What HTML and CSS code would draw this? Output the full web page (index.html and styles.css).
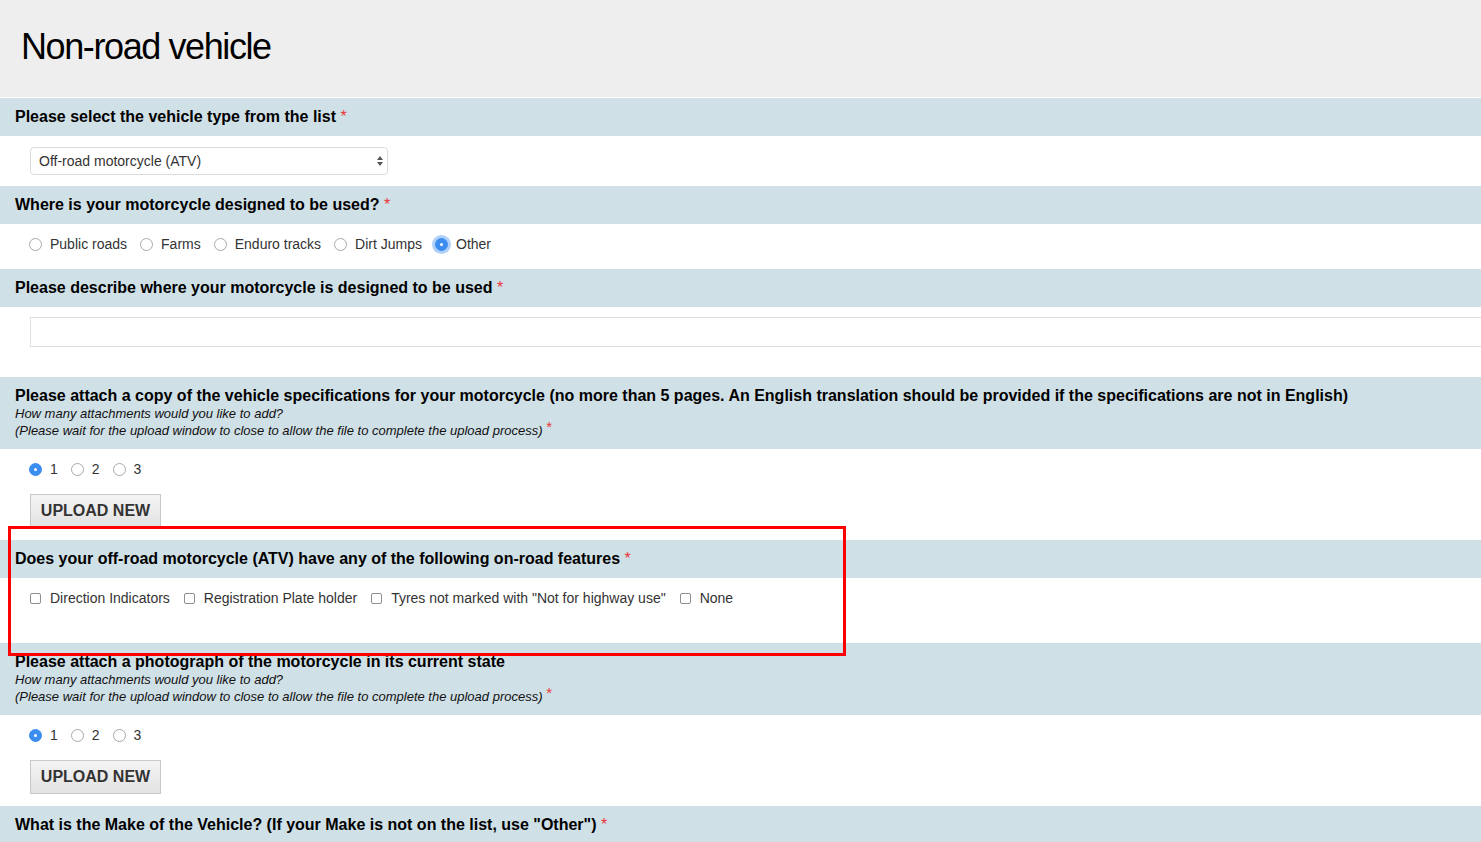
FILE: index.html
```html
<!DOCTYPE html>
<html lang="en">
<head>
    <meta charset="UTF-8">
    <meta name="viewport" content="width=device-width, initial-scale=1.0">
    <title>Non-road vehicle</title>
    <link rel="stylesheet" href="styles.css">
</head>
<body>
    <!-- Page title -->
    <div class="page-header">
        <h1>Non-road vehicle</h1>
    </div>

    <div class="form">
        <!-- Vehicle type -->
        <div class="question">
            <div class="question-label">Please select the vehicle type from the list <span class="req">*</span></div>
            <div class="question-body body-select">
                <div class="select-wrap">
                    <select class="select">
                        <option>Off-road motorcycle (ATV)</option>
                    </select>
                    <svg class="select-arrows" width="8" height="12" viewBox="0 0 8 12">
                        <path d="M4 1 L7 5 H1 Z" fill="#555"/>
                        <path d="M4 11 L7 7 H1 Z" fill="#555"/>
                    </svg>
                </div>
            </div>
        </div>

        <!-- Usage -->
        <div class="question">
            <div class="question-label">Where is your motorcycle designed to be used? <span class="req">*</span></div>
            <div class="question-body body-options">
                <div class="options">
                    <label class="option"><span class="radio"></span>Public roads</label>
                    <label class="option"><span class="radio"></span>Farms</label>
                    <label class="option"><span class="radio"></span>Enduro tracks</label>
                    <label class="option"><span class="radio"></span>Dirt Jumps</label>
                    <label class="option"><span class="radio checked focused"></span>Other</label>
                </div>
            </div>
        </div>

        <!-- Description -->
        <div class="question">
            <div class="question-label">Please describe where your motorcycle is designed to be used <span class="req">*</span></div>
            <div class="question-body body-text">
                <input type="text" class="text-input">
            </div>
        </div>

        <!-- Specifications -->
        <div class="question">
            <div class="question-label label-tall">
                Please attach a copy of the vehicle specifications for your motorcycle (no more than 5 pages. An English translation should be provided if the specifications are not in English)
                <div class="hint">How many attachments would you like to add?</div>
                <div class="hint">(Please wait for the upload window to close to allow the file to complete the upload process) <span class="req req-up">*</span></div>
            </div>
            <div class="question-body body-upload">
                <div class="options">
                    <label class="option"><span class="radio checked"></span>1</label>
                    <label class="option"><span class="radio"></span>2</label>
                    <label class="option"><span class="radio"></span>3</label>
                </div>
                <button type="button" class="upload-btn">UPLOAD NEW</button>
            </div>
        </div>

        <!-- On-road features -->
        <div class="question">
            <div class="question-label">Does your off-road motorcycle (ATV) have any of the following on-road features <span class="req">*</span></div>
            <div class="question-body body-checks">
                <div class="options">
                    <label class="option"><span class="checkbox"></span>Direction Indicators</label>
                    <label class="option"><span class="checkbox"></span>Registration Plate holder</label>
                    <label class="option"><span class="checkbox"></span>Tyres not marked with "Not for highway use"</label>
                    <label class="option"><span class="checkbox"></span>None</label>
                </div>
            </div>
        </div>

        <!-- Photograph -->
        <div class="question">
            <div class="question-label label-tall">
                Please attach a photograph of the motorcycle in its current state
                <div class="hint">How many attachments would you like to add?</div>
                <div class="hint">(Please wait for the upload window to close to allow the file to complete the upload process) <span class="req req-up">*</span></div>
            </div>
            <div class="question-body body-upload">
                <div class="options">
                    <label class="option"><span class="radio checked"></span>1</label>
                    <label class="option"><span class="radio"></span>2</label>
                    <label class="option"><span class="radio"></span>3</label>
                </div>
                <button type="button" class="upload-btn">UPLOAD NEW</button>
            </div>
        </div>

        <!-- Make -->
        <div class="question">
            <div class="question-label">What is the Make of the Vehicle? (If your Make is not on the list, use "Other") <span class="req">*</span></div>
        </div>
    </div>

    <!-- Highlight annotation -->
    <div class="highlight"></div>
</body>
</html>
```

FILE: styles.css
```css
/* Base */
*, *::before, *::after {
    box-sizing: border-box;
}

body {
    margin: 0;
    font-family: "Liberation Sans", Arial, sans-serif;
    color: #000;
    background: #fff;
    overflow: hidden;
    position: relative;
}

/* Header */
.page-header {
    background: #eeeeee;
    border-bottom: 1px solid #fff;
    height: 98px;
    padding: 26px 21px 0;
}

.page-header h1 {
    margin: 0;
    font-size: 36px;
    font-weight: normal;
    line-height: 42px;
    letter-spacing: -1.4px;
}

/* Questions */
.question-label {
    background: #d0e0e7;
    padding: 10px 15px;
    font-size: 16px;
    font-weight: bold;
    line-height: 18px;
}

.label-tall {
    height: 72px;
    padding: 10px 15px 0;
}

.hint {
    font-size: 13px;
    font-weight: normal;
    font-style: italic;
    line-height: 17px;
    color: #111;
}

.req {
    color: #e8383b;
    font-weight: normal;
    font-style: normal;
    font-size: 16px;
    line-height: 0;
}

.req-up {
    font-size: 15px;
    position: relative;
    top: -3px;
}

.question-body {
    padding: 11px 30px;
}

.body-select {
    height: 50px;
}

.body-options {
    height: 45px;
}

.body-text {
    height: 70px;
    padding-top: 10px;
}

.body-upload {
    height: 91px;
}

.body-checks {
    height: 65px;
}

/* Select */
.select-wrap {
    position: relative;
    width: 358px;
}

.select {
    appearance: none;
    -webkit-appearance: none;
    width: 100%;
    height: 28px;
    padding: 0 8px;
    font-family: inherit;
    font-size: 14px;
    color: #333;
    background: #fff;
    border: 1px solid #dcdcdc;
    border-radius: 4px;
}

.select-arrows {
    position: absolute;
    right: 4px;
    top: 8px;
}

/* Radio and checkbox rows */
.options {
    display: flex;
    align-items: center;
    height: 18px;
}

.option {
    display: flex;
    align-items: center;
    font-size: 14px;
    color: #333;
    margin-right: 14px;
}

.radio {
    width: 13px;
    height: 13px;
    border: 1px solid #a9a9a9;
    border-radius: 50%;
    margin: 0 8px 0 -1px;
    background: #fff;
    position: relative;
}

.radio.checked {
    background: #3b8df0;
    border-color: #3b8df0;
}

.radio.checked::after {
    content: "";
    position: absolute;
    left: 4px;
    top: 4px;
    width: 3px;
    height: 3px;
    border-radius: 50%;
    background: #fff;
}

.radio.focused {
    box-shadow: 0 0 0 3px rgba(80, 150, 245, 0.45);
}

.checkbox {
    width: 11px;
    height: 11px;
    border: 1px solid #8f8f8f;
    border-radius: 2px;
    margin: 0 9px 0 0;
    background: #fff;
}

/* Text input */
.text-input {
    display: block;
    width: 1480px;
    height: 30px;
    border: 1px solid #dedede;
    font-family: inherit;
    font-size: 14px;
}

/* Upload button */
.upload-btn {
    display: block;
    margin-top: 16px;
    width: 131px;
    height: 34px;
    padding: 0;
    font-family: inherit;
    font-size: 16px;
    font-weight: bold;
    color: #333;
    background: linear-gradient(#f4f4f4, #e2e2e2);
    border: 1px solid #c8c8c8;
}

/* Red annotation frame */
.highlight {
    position: absolute;
    left: 8px;
    top: 526px;
    width: 838px;
    height: 130px;
    border: 3px solid #f00;
}
```
